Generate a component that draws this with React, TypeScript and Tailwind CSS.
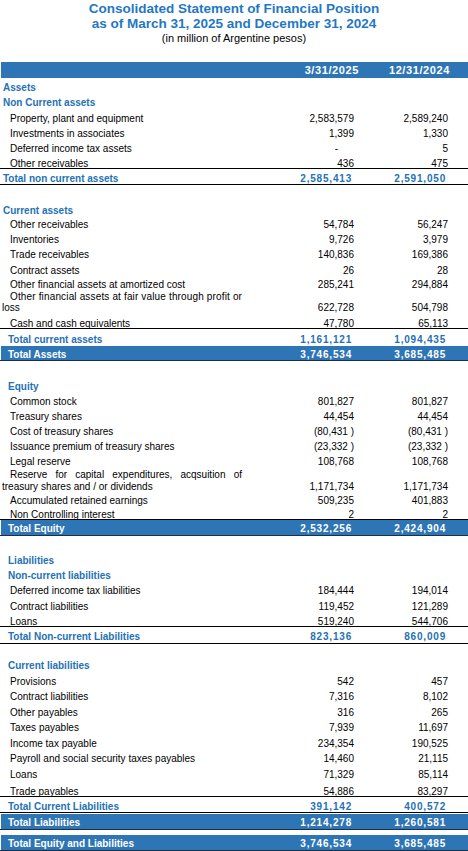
import React from 'react';

const font = "font-['Liberation_Sans',Arial,sans-serif]";

type ItemProps = { label: string; a: string; b: string; h: string };

function Item({ label, a, b, h }: ItemProps) {
  return (
    <div className={`flex items-end ${h} pr-[20px] text-[10px] leading-[8px] text-black`}>
      <div className="flex-1 whitespace-nowrap pl-[10px]">{label}</div>
      <div className="w-[94px] text-right">{a}</div>
      <div className="w-[94px] text-right">{b}</div>
    </div>
  );
}

function Heading({ label, h, pl }: { label: string; h: string; pl: string }) {
  return (
    <div className={`flex items-end ${h} ${pl} text-[10px] leading-[8px] font-bold text-[#2471b5]`}>
      {label}
    </div>
  );
}

function Bar({ label, a, b, h }: { label: string; a: string; b: string; h: string }) {
  return (
    <div className={`ml-[1px] flex items-center ${h} bg-[#2e75b6] pt-[2px] pr-[22px] text-[10px] font-bold text-white`}>
      <div className="flex-1 pl-[7px]">{label}</div>
      <div className="w-[94px] text-right tracking-[0.8px]">{a}</div>
      <div className="w-[94px] text-right tracking-[0.8px]">{b}</div>
    </div>
  );
}

export default function App() {
  return (
    <div className={`${font} w-[468px] bg-white`}>
      {/* Title */}
      <div className="pt-[1px] text-center text-[13.5px] leading-[15px] font-bold text-[#1f78c4]">
        <div>Consolidated Statement of Financial Position</div>
        <div>as of March 31, 2025 and December 31, 2024</div>
      </div>
      <div className="mt-[1px] text-center text-[11px] leading-[13px] text-black">(in million of Argentine pesos)</div>

      {/* Column header */}
      <div className="mt-[17px] ml-[1px] flex h-[16px] items-center bg-[#2e75b6] pr-[18px] text-[11px] font-bold tracking-[0.6px] text-white">
        <div className="flex-1"></div>
        <div className="w-[91px] text-right">3/31/2025</div>
        <div className="w-[91px] text-right">12/31/2024</div>
      </div>

      {/* Assets */}
      <Heading label="Assets" h="h-[14px]" pl="pl-[3px]" />
      <Heading label="Non Current assets" h="h-[15px]" pl="pl-[3px]" />
      <Item label="Property, plant and equipment" a="2,583,579" b="2,589,240" h="h-[16px]" />
      <Item label="Investments in associates" a="1,399" b="1,330" h="h-[15px]" />
      <div className="flex h-[15px] items-end pr-[20px] text-[10px] leading-[8px] text-black">
        <div className="flex-1 pl-[10px]">Deferred income tax assets</div>
        <div className="w-[94px] pr-[16px] text-right">-</div>
        <div className="w-[94px] text-right">5</div>
      </div>
      <Item label="Other receivables" a="436" b="475" h="h-[15px]" />
      <div className="flex h-[17px] items-end border-y border-black pr-[22px] pb-[1px] text-[10px] leading-[8px] font-bold text-[#2471b5]">
        <div className="flex-1 pl-[3px]">Total non current assets</div>
        <div className="w-[94px] text-right tracking-[0.8px]">2,585,413</div>
        <div className="w-[94px] text-right tracking-[0.8px]">2,591,050</div>
      </div>

      <div className="h-[15px]"></div>
      <Heading label="Current assets" h="h-[15px]" pl="pl-[3px]" />
      <Item label="Other receivables" a="54,784" b="56,247" h="h-[14px]" />
      <Item label="Inventories" a="9,726" b="3,979" h="h-[15px]" />
      <Item label="Trade receivables" a="140,836" b="169,386" h="h-[15px]" />
      <Item label="Contract assets" a="26" b="28" h="h-[16px]" />
      <Item label="Other financial assets at amortized cost" a="285,241" b="294,884" h="h-[14px]" />
      <div className="flex h-[24px] items-end pr-[20px] text-[10px] leading-[11px] text-black">
        <div className="flex-1 whitespace-nowrap pl-[2px]">
          <div className="pl-[8px] tracking-[0.15px]">Other financial assets at fair value through profit or</div>
          <div>loss</div>
        </div>
        <div className="w-[94px] text-right">622,728</div>
        <div className="w-[94px] text-right">504,798</div>
      </div>
      <Item label="Cash and cash equivalents" a="47,780" b="65,113" h="h-[15px]" />
      <div className="flex h-[18px] items-end border-t border-black pr-[22px] pb-[2px] text-[10px] leading-[8px] font-bold text-[#2471b5]">
        <div className="flex-1 pl-[8px]">Total current assets</div>
        <div className="w-[94px] text-right tracking-[0.8px]">1,161,121</div>
        <div className="w-[94px] text-right tracking-[0.8px]">1,094,435</div>
      </div>
      <div className="border-b border-[#1c2f45]">
        <Bar label="Total Assets" a="3,746,534" b="3,685,485" h="h-[14px]" />
      </div>

      {/* Equity */}
      <div className="h-[15px]"></div>
      <Heading label="Equity" h="h-[15px]" pl="pl-[8px]" />
      <Item label="Common stock" a="801,827" b="801,827" h="h-[15px]" />
      <Item label="Treasury shares" a="44,454" b="44,454" h="h-[15px]" />
      <Item label="Cost of treasury shares" a="(80,431 )" b="(80,431 )" h="h-[15px]" />
      <Item label="Issuance premium of treasury shares" a="(23,332 )" b="(23,332 )" h="h-[15px]" />
      <Item label="Legal reserve" a="108,768" b="108,768" h="h-[15px]" />
      <div className="flex h-[27px] items-end pr-[20px] text-[10px] leading-[12px] text-black">
        <div className="flex-1 whitespace-nowrap pl-[2px]">
          <div className="ml-[8px] w-[232px] text-justify [text-align-last:justify]">Reserve for capital expenditures, acqsuition of</div>
          <div>treasury shares and / or dividends</div>
        </div>
        <div className="w-[94px] text-right">1,171,734</div>
        <div className="w-[94px] text-right">1,171,734</div>
      </div>
      <Item label="Accumulated retained earnings" a="509,235" b="401,883" h="h-[12px]" />
      <Item label="Non Controlling interest" a="2" b="2" h="h-[14px]" />
      <div className="border-t border-black border-b border-b-[#1c2f45]">
        <Bar label="Total Equity" a="2,532,256" b="2,424,904" h="h-[15px]" />
      </div>

      {/* Liabilities */}
      <div className="h-[14px]"></div>
      <Heading label="Liabilities" h="h-[15px]" pl="pl-[8px]" />
      <Heading label="Non-current liabilities" h="h-[15px]" pl="pl-[8px]" />
      <Item label="Deferred income tax liabilities" a="184,444" b="194,014" h="h-[15px]" />
      <Item label="Contract liabilities" a="119,452" b="121,289" h="h-[16px]" />
      <Item label="Loans" a="519,240" b="544,706" h="h-[15px]" />
      <div className="flex h-[18px] items-end border-y border-black pr-[22px] pb-[2px] text-[10px] leading-[8px] font-bold text-[#2471b5]">
        <div className="flex-1 pl-[8px]">Total Non-current Liabilities</div>
        <div className="w-[94px] text-right tracking-[0.8px]">823,136</div>
        <div className="w-[94px] text-right tracking-[0.8px]">860,009</div>
      </div>

      <div className="h-[11px]"></div>
      <Heading label="Current liabilities" h="h-[15px]" pl="pl-[8px]" />
      <Item label="Provisions" a="542" b="457" h="h-[16px]" />
      <Item label="Contract liabilities" a="7,316" b="8,102" h="h-[15px]" />
      <Item label="Other payables" a="316" b="265" h="h-[16px]" />
      <Item label="Taxes payables" a="7,939" b="11,697" h="h-[15px]" />
      <Item label="Income tax payable" a="234,354" b="190,525" h="h-[16px]" />
      <Item label="Payroll and social security taxes payables" a="14,460" b="21,115" h="h-[15px]" />
      <Item label="Loans" a="71,329" b="85,114" h="h-[16px]" />
      <Item label="Trade payables" a="54,886" b="83,297" h="h-[17px]" />
      <div className="flex h-[17px] items-end border-y border-black pr-[22px] pb-[1px] text-[10px] leading-[8px] font-bold text-[#2471b5]">
        <div className="flex-1 pl-[8px]">Total Current Liabilities</div>
        <div className="w-[94px] text-right tracking-[0.8px]">391,142</div>
        <div className="w-[94px] text-right tracking-[0.8px]">400,572</div>
      </div>
      <div className="mt-[1px] border-b border-[#1c2f45]">
        <Bar label="Total Liabilities" a="1,214,278" b="1,260,581" h="h-[15px]" />
      </div>
      <div className="mt-[5px] border-b border-[#1c2f45]">
        <Bar label="Total Equity and Liabilities" a="3,746,534" b="3,685,485" h="h-[15px]" />
      </div>
    </div>
  );
}
